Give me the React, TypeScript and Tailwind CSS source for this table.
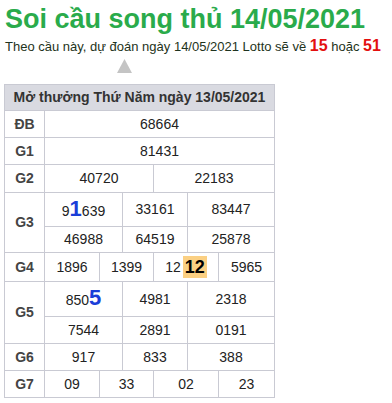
import React from "react"

const font = { fontFamily: '"Liberation Sans", Arial, sans-serif' }

function Label({ text, span2 }: { text: string; span2?: boolean }) {
  return (
    <div
      className={`flex items-center justify-center bg-white text-[14px] font-bold text-[#444] ${span2 ? "row-span-2" : ""}`}
    >
      {text}
    </div>
  )
}

function Cell({ children, span }: { children: React.ReactNode; span?: string }) {
  return (
    <div className={`flex items-center justify-center bg-white text-[14px] text-[#222] ${span ?? ""}`}>
      {children}
    </div>
  )
}

const Big = ({ d }: { d: string }) => (
  <span className="text-[22px] leading-[22px] font-bold text-[#1a3ed8]">{d}</span>
)

export default function App() {
  return (
    <div className="w-[392px] h-[403px] bg-white pl-[4px]" style={font}>
      <h1 className="h-[36px] text-[27px] leading-[39px] font-bold text-[#2aab4b] pl-[1px] whitespace-nowrap">
        Soi cầu song thủ 14/05/2021
      </h1>
      <p className="h-[19px] mt-[1px] text-[13px] leading-[18px] text-[#1e3320] pl-[1px] whitespace-nowrap">
        Theo cầu này, dự đoán ngày 14/05/2021 Lotto sẽ về{" "}
        <span className="text-[16px] leading-[18px] font-bold text-[#e30f0f]">15</span> hoặc{" "}
        <span className="text-[16px] leading-[18px] font-bold text-[#e30f0f]">51</span>
      </p>
      <div className="mt-[3px] h-[14px] pl-[113px]">
        <svg width="15" height="14" viewBox="0 0 15 14">
          <polygon points="7.5,0 15,14 0,14" fill="#c4c4c4" />
        </svg>
      </div>
      <div className="mt-[11px] inline-grid grid-cols-[39px_54px_22px_30px_33px_30px_55px] grid-rows-[25px_26px_26px_27px_33px_25px_28px_34px_26px_26px_26px] gap-px bg-[#c9cad3] p-px">
        <div className="col-span-7 flex items-center justify-center bg-[#d9dae1] text-[14px] font-bold text-[#333]">
          Mở thưởng Thứ Năm ngày 13/05/2021
        </div>

        <Label text="ĐB" />
        <Cell span="col-span-6">68664</Cell>

        <Label text="G1" />
        <Cell span="col-span-6">81431</Cell>

        <Label text="G2" />
        <Cell span="col-span-3">40720</Cell>
        <Cell span="col-span-3">22183</Cell>

        <Label text="G3" span2 />
        <Cell span="col-span-2">
          <span>
            9<Big d="1" />639
          </span>
        </Cell>
        <Cell span="col-span-2">33161</Cell>
        <Cell span="col-span-2">83447</Cell>
        <Cell span="col-span-2">46988</Cell>
        <Cell span="col-span-2">64519</Cell>
        <Cell span="col-span-2">25878</Cell>

        <Label text="G4" />
        <Cell>1896</Cell>
        <Cell span="col-span-2">1399</Cell>
        <Cell span="col-span-2">
          <span className="flex items-center">
            12
            <span className="ml-[2px] px-[2px] bg-[#fbd083] text-[18px] leading-[22px] font-bold text-black">12</span>
          </span>
        </Cell>
        <Cell>5965</Cell>

        <Label text="G5" span2 />
        <Cell span="col-span-2">
          <span>
            850<Big d="5" />
          </span>
        </Cell>
        <Cell span="col-span-2">4981</Cell>
        <Cell span="col-span-2">2318</Cell>
        <Cell span="col-span-2">7544</Cell>
        <Cell span="col-span-2">2891</Cell>
        <Cell span="col-span-2">0191</Cell>

        <Label text="G6" />
        <Cell span="col-span-2">917</Cell>
        <Cell span="col-span-2">833</Cell>
        <Cell span="col-span-2">388</Cell>

        <Label text="G7" />
        <Cell>09</Cell>
        <Cell span="col-span-2">33</Cell>
        <Cell span="col-span-2">02</Cell>
        <Cell>23</Cell>
      </div>
    </div>
  )
}
